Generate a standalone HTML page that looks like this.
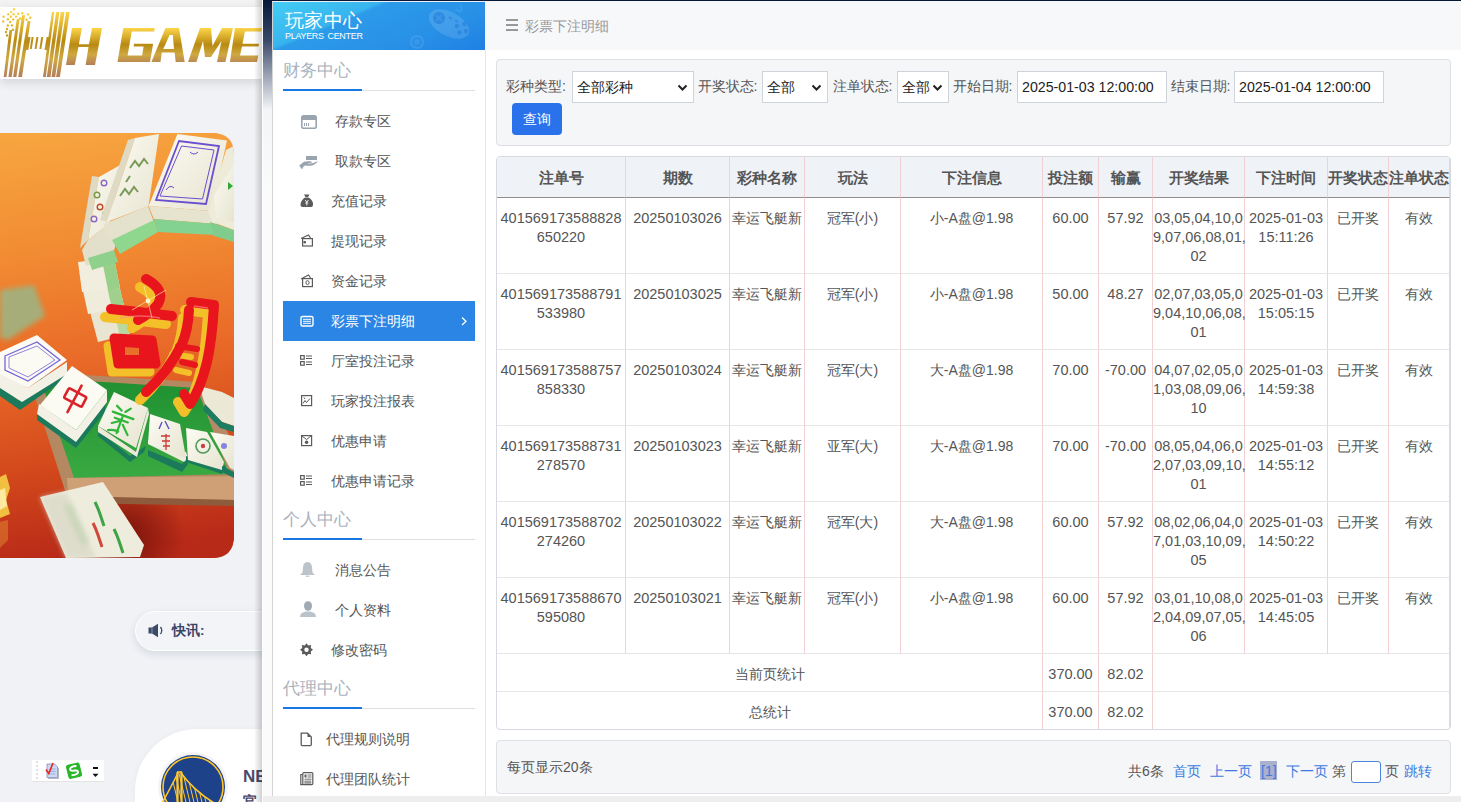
<!DOCTYPE html>
<html><head><meta charset="utf-8">
<style>
*{box-sizing:border-box}
html,body{margin:0;padding:0}
body{width:1461px;height:802px;overflow:hidden;position:relative;background:#f0f2f6;font-family:"Liberation Sans",sans-serif;color:#555}
.abs{position:absolute}
/* background page */
#topstrip{left:0;top:0;width:262px;height:7px;background:#f3f3f3}
#logobar{left:0;top:7px;width:262px;height:72px;background:#fff;box-shadow:0 3px 10px rgba(0,0,0,.13)}
#banner{left:0;top:133px;width:234px;height:425px;border-radius:0 22px 22px 0;overflow:hidden;background:linear-gradient(180deg,#f5a142 0%,#ef7a2a 30%,#e2561f 60%,#b8321a 85%,#a82818 100%)}
#pill{left:135px;top:611px;width:160px;height:40px;border-radius:20px;background:#f2f4f8;border:1px solid #fff;box-shadow:0 3px 8px rgba(20,30,60,.12)}
#card{left:135px;top:729px;width:200px;height:140px;border-radius:62px;background:#fff;box-shadow:0 0 6px rgba(0,0,0,.04)}
#sogou{left:32px;top:760px;width:72px;height:22px;background:#fff;border-bottom:1px solid #e4e4e4}
#pageedge{left:254px;top:0px;width:8px;height:802px;background:linear-gradient(90deg,rgba(0,0,0,0),rgba(0,0,0,.18))}
/* frame */
#frame{left:262px;top:0;width:1199px;height:802px;background:linear-gradient(180deg,#06173a 0px,#3a4868 40px,#9aa2b4 75px,#f4f5f7 110px,#fbfbfc 200px,#fbfbfc 100%)}
#frame:before{content:"";position:absolute;left:0;top:0;width:1px;height:802px;background:#fff}
#modal{left:272px;top:1px;width:1189px;height:795px;background:#fff;border-left:1px solid #d4d4d4;border-top:1px solid #eee}
#bottombar{left:263px;top:796px;width:1198px;height:6px;background:#eeeeef}
/* sidebar */
#side{left:273px;top:2px;width:212px;height:794px;background:#fff}
#sidehead{left:273px;top:2px;width:212px;height:48px;background:linear-gradient(157deg,#44cdf4 0%,#38b4ee 33%,#2c9ae9 36%,#2891e7 70%,#1f80e3 100%);overflow:hidden}
#sideborder{left:485px;top:50px;width:1px;height:746px;background:#e3e6ea}
.ht1{position:absolute;left:11.5px;top:8px;font-size:18.5px;color:#fff;line-height:22px;letter-spacing:.6px}
.ht2{position:absolute;left:12px;top:29px;font-size:9px;color:#fff;line-height:10px;letter-spacing:-0.3px;word-spacing:1.5px}
.sec{position:absolute;left:283px;font-size:17px;color:#a9b2be;line-height:20px}
.secline{position:absolute;left:283px;width:192px;height:1px;background:#dcdfe3}
.secline i{position:absolute;left:0;top:-1px;width:79px;height:2px;background:#1a78e2}
.mt{position:absolute;font-size:14px;line-height:20px;white-space:nowrap}
/* main */
#mainhead{left:486px;top:1px;width:975px;height:49px;background:#f7f8fa}
#title{left:525px;top:17.5px;font-size:14px;color:#999;line-height:16px}
#filter{left:496px;top:59px;width:955px;height:87px;background:#f5f6f8;border:1px solid #dde0e5;border-radius:4px}
.lbl{position:absolute;top:78px;font-size:14.2px;color:#555;line-height:16px}
.sel{position:absolute;top:71px;height:32px;background:#fff;border:1px solid #ced4da;font-size:14px;color:#222;line-height:30px;padding-left:4px}
.sel svg{position:absolute;right:5px;top:12px}
.inp{position:absolute;top:71px;height:32px;background:#fff;border:1px solid #ced4da;font-size:14.2px;color:#222;line-height:30px;padding-left:4px}
#btn{left:512px;top:103px;width:50px;height:32px;border-radius:4px;background:#2a72ec;color:#fff;font-size:14px;line-height:32px;text-align:center}
#tbl{position:absolute;left:496px;top:156px;border-collapse:separate;border-spacing:0;table-layout:fixed;width:954px;border:1px solid #d6dae0;border-radius:4px;overflow:hidden}
#tbl th{background:#eff2f6;height:41px;font-size:15px;font-weight:bold;color:#555;text-align:center;border-right:1px solid #f3d0d3;border-bottom:1px solid #978c8c;padding:2px 0 0 0;white-space:nowrap}
#tbl td{white-space:nowrap;font-size:14px;color:#555;text-align:center;vertical-align:top;border-right:1px solid #f3d0d3;border-bottom:1px solid #e6e6e6;padding:10.6px 0 0 0;line-height:19px;height:76px}
#tbl tr.sum td{height:38px;vertical-align:middle;padding:4px 0 0 0;line-height:19px}
#tbl tr.sum:last-child td{height:37px}
#tbl td.n{font-size:14.5px}
#tbl th:last-child,#tbl td:last-child{border-right:1px solid #f3d0d3}
#tbl tr:last-child td{border-bottom:none}
#pager{left:496px;top:740px;width:955px;height:54px;background:#f5f6f8;border:1px solid #dde0e5;border-radius:4px}
.pg{position:absolute;top:763px;font-size:14px;line-height:16px;color:#555}
.pg.b{color:#3b7be0}
</style></head>
<body>
<!-- ============ background page ============ -->
<div id="topstrip" class="abs"></div>
<div id="logobar" class="abs"></div>
<div id="banner" class="abs"></div>
<div id="pill" class="abs"></div>
<div id="card" class="abs"></div>
<div id="sogou" class="abs"></div>
<div id="bgcontent">
<svg class="abs" style="left:0;top:7px" width="262" height="72" viewBox="0 7 262 72">
<defs><linearGradient id="gold" x1="0" y1="0" x2="0" y2="1" gradientUnits="objectBoundingBox">
<stop offset="0" stop-color="#fcd54a"/><stop offset=".45" stop-color="#b98a12"/><stop offset=".7" stop-color="#cfa842"/><stop offset="1" stop-color="#b47e58"/></linearGradient>
<linearGradient id="gold2" x1="0" y1="12" x2="0" y2="77" gradientUnits="userSpaceOnUse">
<stop offset="0" stop-color="#fcd54a"/><stop offset=".45" stop-color="#b98a12"/><stop offset=".72" stop-color="#cfa842"/><stop offset="1" stop-color="#b47e58"/></linearGradient>
<linearGradient id="gold3" x1="0" y1="28" x2="0" y2="65" gradientUnits="userSpaceOnUse">
<stop offset="0" stop-color="#fcd54a"/><stop offset=".45" stop-color="#b98a12"/><stop offset=".72" stop-color="#cfa842"/><stop offset="1" stop-color="#b47e58"/></linearGradient></defs>
<g fill="url(#gold2)">
<polygon points="3.7,77 6.5,77 12.2,30 9.4,30"/><polygon points="8.4,77 11.7,77 19.6,19 16.8,19"/><polygon points="13.1,77 16.4,77 25,15.3 22,15.3"/><polygon points="18.2,77 22,77 30.5,21 27.5,21"/>
<polygon points="43,77 45.8,77 54.3,12 51.9,12"/><polygon points="46.8,77 50.5,77 59.4,12 56.1,12"/><polygon points="51.5,77 55.2,77 64.5,12 60.8,12"/><polygon points="56.1,77 59.9,77 69.7,12 66,12"/>
<polygon points="24.5,50 26.7,37 30.5,37 28.3,50"/><polygon points="44.5,50 46.7,37 50.5,37 48.3,50"/>
<polygon points="29.8,49 31.6,37 33.6,37 31.8,49"/><polygon points="34.6,49 36.4,37 38.4,37 36.6,49"/><polygon points="39.4,49 41.2,37 43.2,37 41.4,49"/>
<circle cx="14" cy="9.3" r="1.2"/><circle cx="11.2" cy="12" r="1.2"/><circle cx="8.2" cy="14.3" r="1.2"/><circle cx="13.6" cy="14.2" r="1.2"/><circle cx="3.6" cy="16.8" r="1.2"/><circle cx="10.8" cy="16.8" r="1.2"/><circle cx="16" cy="16.6" r="1.2"/><circle cx="18.2" cy="13.8" r="1.2"/><circle cx="22.2" cy="13.2" r="1.2"/><circle cx="28" cy="14.4" r="1.2"/><circle cx="30.2" cy="17.8" r="1.2"/><circle cx="20.2" cy="18.5" r="1.2"/>
<circle cx="7.9" cy="19.2" r="1.2"/><circle cx="13.2" cy="19.4" r="1.2"/><circle cx="3.2" cy="21.4" r="1.2"/><circle cx="10.2" cy="22" r="1.2"/><circle cx="26.6" cy="19.8" r="1.2"/><circle cx="7.8" cy="25.4" r="1.2"/><circle cx="12" cy="25.4" r="1.2"/><circle cx="7" cy="29" r="1.2"/><circle cx="13" cy="29.8" r="1.2"/><circle cx="6" cy="32" r="1.2"/><circle cx="7" cy="35.5" r="1.2"/>
</g>
<g fill="url(#gold3)" fill-rule="evenodd">
<polygon points="72,28 81.9,28 78.9,44.3 89,44.3 92,28 102,28 95,65 85.6,65 88.5,47.1 78.4,47.1 74.8,65 66,65"/>
<polygon points="123.3,28 154.8,28 154.2,31.4 131.7,31.4 127.6,55.5 142.1,55.5 143.6,46.5 133.6,46.5 134.1,43.7 153.1,43.7 150,62 117.5,62"/>
<path d="M151.4 62 L165.5 28 L179 28 L184.7 62 L175.7 62 L174.6 52.5 L161.8 52.5 L160.5 62 Z M163.3 49 L174 49 L172.8 35 L169.6 35 Z"/>
<polygon points="188,62 200,28 211,28 212.5,46 222,28 233,28 225.4,62 217,62 221.5,41 211,57 205,57 203,41 196.5,62"/>
<polygon points="235,28 262,28 261.4,31.4 244.9,31.4 242.5,43.7 259,43.7 258.5,46.5 242,46.5 240,55.5 258.3,55.5 257,62 229.9,62"/>
</g>
</svg>
<svg class="abs" style="left:0;top:133px" width="234" height="425" viewBox="0 133 234 425">
<defs>
<clipPath id="bclip"><path d="M0 133 H212 Q234 133 234 155 V536 Q234 558 212 558 H0 Z"/></clipPath>
<linearGradient id="bbg" x1="0" y1="133" x2="60" y2="558" gradientUnits="userSpaceOnUse">
<stop offset="0" stop-color="#f7a640"/><stop offset=".3" stop-color="#f18a32"/><stop offset=".55" stop-color="#e96a28"/><stop offset=".78" stop-color="#d44a1c"/><stop offset="1" stop-color="#b82a18"/></linearGradient>
<radialGradient id="dark" cx="125" cy="535" r="60" gradientUnits="userSpaceOnUse"><stop offset="0" stop-color="#6a0c08" stop-opacity=".8"/><stop offset="1" stop-color="#6a0c08" stop-opacity="0"/></radialGradient>
<linearGradient id="tile" x1="0" y1="0" x2="1" y2="1"><stop offset="0" stop-color="#fdfcf4"/><stop offset="1" stop-color="#e6e3cf"/></linearGradient>
<linearGradient id="felt" x1="0" y1="0" x2="0" y2="1"><stop offset="0" stop-color="#1f8f30"/><stop offset="1" stop-color="#3aaa42"/></linearGradient>
<filter id="blur2"><feGaussianBlur stdDeviation="2.5"/></filter>
<filter id="blur1"><feGaussianBlur stdDeviation="0.45"/></filter>
</defs>
<g clip-path="url(#bclip)">
<rect x="0" y="133" width="234" height="425" fill="url(#bbg)"/>
<rect x="0" y="133" width="234" height="425" fill="url(#dark)"/>
<g filter="url(#blur1)">
<!-- arc tiles -->
<polygon points="90,312 122,298 130,334 98,342" fill="#e9e5d0"/>
<polygon points="112,300 122,298 130,334 120,338" fill="#b9d8a0"/>
<polygon points="82,286 118,280 124,306 88,314" fill="#efecdb"/>
<polygon points="106,282 118,280 124,306 112,309" fill="#9fd08c"/>
<polygon points="78,262 114,258 120,288 82,292" fill="#f1eedf"/>
<polygon points="102,260 114,258 120,288 108,290" fill="#98d08a"/>
<!-- T4 circles -->
<polygon points="82,250 88,240 109,224 118,236 112,258 86,266" fill="#e2dfca"/>
<polygon points="88,258 114,250 118,262 92,270" fill="#8fd08c"/>
<polygon points="80,248 92,176 99,177 88,240" fill="#dedac4"/>
<polygon points="88,240 99,177 122,164 109,224" fill="url(#tile)"/>
<circle cx="104" cy="183" r="2.8" fill="none" stroke="#8d66c0" stroke-width="1.4"/><circle cx="97" cy="195" r="2.8" fill="none" stroke="#7a9a4a" stroke-width="1.4"/><circle cx="100" cy="207" r="2.8" fill="none" stroke="#c04a28" stroke-width="1.4"/><circle cx="94" cy="219" r="2.8" fill="none" stroke="#8d66c0" stroke-width="1.4"/><circle cx="105" cy="214" r="2.4" fill="none" stroke="#7a9a4a" stroke-width="1.2"/>
<!-- T3 bamboo -->
<polygon points="104,224 148,206 154,222 118,242 106,236" fill="#e4e1cc"/>
<polygon points="112,240 154,220 158,232 120,254" fill="#8fd68f"/>
<polygon points="100,220 128,140 135,138 107,222" fill="#dedac4"/>
<polygon points="107,222 135,138 159,134 148.6,206" fill="url(#tile)"/>
<path d="M130 168 l5 -7 l4 5 l5 -7 l4 5 M120 196 l5 -7 l4 5 l5 -7 l4 5 M126 182 l4 -6" stroke="#7a9a5a" stroke-width="2" fill="none"/>
<!-- T2 purple -->
<polygon points="148.6,206 211.5,211 216.7,224 153.8,219" fill="#e6e3cf"/>
<polygon points="153.8,219 216.7,224 215,235 158,232" fill="#84d292"/>
<polygon points="148.6,206 177.4,134 227,140.5 211.5,211" fill="url(#tile)"/>
<polygon points="156,200 179,141 219,146 206,204" fill="none" stroke="#6a4fd0" stroke-width="1.8"/>
<polygon points="160,196 181.5,146 214,150 202.5,199" fill="none" stroke="#6a4fd0" stroke-width="1"/>
<path d="M166 190 q4 -6 8 -2 M198 152 q-4 4 -8 0" stroke="#6a4fd0" stroke-width="1" fill="none"/>
<!-- T1 right -->
<polygon points="210,222 234,230 234,242 214,236" fill="#80cc8c"/>
<polygon points="208,212 226,150 234,146 234,230 212,222" fill="#eeebd8"/>
<polygon points="214,196 234,164 234,222 216,218" fill="url(#tile)"/>
<path d="M228 182 l5 4 l-5 4 z" fill="#2fa83a"/>
<!-- blurry left tile -->
<polygon points="0,290 34,285 45,316 8,340 0,338" fill="#a6ad78" filter="url(#blur2)"/>
<!-- table: frame -->
<polygon points="37,372 198,382 234,446 234,504 68,500 36,400" fill="#b48860"/>
<polygon points="40,378 197,388 232,474 74,478" fill="url(#felt)"/>
<polygon points="197,388 202,386 234,444 234,476 230,476" fill="#b68a66"/>
<polygon points="67,478 234,476 234,500 68,496" fill="#cf9f74"/>
<polygon points="68,496 234,500 234,506 70,503" fill="#8e5c3c"/>
<!-- tile wall right -->
<polygon points="199,386 222,392 234,398 234,426 222,422 205,404" fill="#ebe8d6"/>
<polygon points="205,404 222,422 234,426 234,432 220,428 203,410" fill="#1f7d62"/>
<!-- purple tile left -->
<polygon points="0,384 18,400 62,372 66,378 20,410 0,396" fill="#1b7a5c"/>
<polygon points="0,372 28,388 67,362 67,374 22,402 0,388" fill="#f3f1e6"/>
<polygon points="0,352 37,335 67,360 28,388 0,374" fill="#fbfaf3"/>
<polygon points="5,356 37,342 60,360 28,381 5,370" fill="none" stroke="#7566d8" stroke-width="1.3"/>
<polygon points="9,357 37,346 55,360 28,377 9,368" fill="none" stroke="#7566d8" stroke-width=".8"/>
<!-- 中 tile -->
<polygon points="37,412 76,440 105,404 105,412 76,448 37,420" fill="#1b7a5c"/>
<polygon points="39,404 76,430 107,390 107,402 76,442 37,414" fill="#f3f1e6"/>
<polygon points="40,405 72,366 107,390 76,430" fill="#fbfaf3"/>
<g transform="rotate(28 75 398)" stroke="#d9242a" stroke-width="2.6" fill="none" stroke-linecap="round"><rect x="65" y="392" width="20" height="11" rx="1.5"/><path d="M75 384 V414"/></g>
<!-- 發 tile -->
<polygon points="98,436 130,462 144,452 146,446 130,456 98,430" fill="#1b7a5c"/>
<polygon points="98,426 136,452 148,408 149,414 137,457 98,432" fill="#eeeadb"/>
<polygon points="98,426 114,392 148,408 136,448" fill="url(#tile)"/>
<g transform="rotate(20 121 421)" stroke="#2eb63a" stroke-width="2.2" fill="none" stroke-linecap="round"><path d="M112 408 l6 3 M126 406 l-4 5 M110 415 H132 M114 420 H128 M121 415 V434 M113 426 l6 -4 M124 424 l8 8 M112 434 q6 -3 10 -2"/></g>
<!-- 八萬 tile -->
<polygon points="148,456 182,472 188,464 186,458 182,464 148,450" fill="#1b7a5c"/>
<polygon points="148,444 184,462 188,458 186,452 148,440" fill="#eeeadb"/>
<polygon points="148,444 150,414 180,424 186,458" fill="url(#tile)"/>
<path d="M162 422 l-3 7 M165 421 l4 8" stroke="#5a4ccc" stroke-width="1.4" fill="none"/>
<path d="M161 436 h9 M162 441 h8 M163 446 h7 M166 434 v16" stroke="#d03636" stroke-width="1.3"/>
<!-- circle tile -->
<polygon points="186,462 222,474 226,466 186,456" fill="#1b7a5c"/>
<polygon points="186,428 207,432 224,462 222,470 188,460" fill="url(#tile)"/>
<circle cx="203" cy="446" r="7" fill="none" stroke="#4e9a5a" stroke-width="1.6"/><circle cx="203" cy="446" r="2.2" fill="#c84040"/>
<polygon points="210,432 234,436 234,470 230,468" fill="url(#tile)"/>
<circle cx="224" cy="446" r="3" fill="#6a6adc" opacity=".8"/>
<polygon points="222,466 234,472 234,478 222,472" fill="#1b7a5c"/>
<!-- 胡 gold extrusion -->
<g transform="translate(-6,8)" stroke="#f3c02c" stroke-linecap="round" stroke-linejoin="round" fill="none">
<path d="M146 279 Q166 290 158 304 Q150 314 138 320" stroke-width="10"/>
<path d="M111 309 Q140 312 172 316" stroke-width="10"/>
<path d="M114 338 L152 340 L156 364 L118 364 Z" stroke-width="9" fill="#f3c02c"/>
<path d="M189 310 Q188 330 182 344 Q168 372 146 392" stroke-width="10"/>
<path d="M191 302 L214 305 Q212 340 207 362 Q200 390 190 404 L184 394" stroke-width="10"/>
<path d="M178 346 L197 349 M182 362 L195 365" stroke-width="6"/>
</g>
<g stroke="#e8161c" stroke-linecap="round" stroke-linejoin="round" fill="none">
<path d="M146 279 Q166 290 158 304 Q150 314 138 320" stroke-width="10"/>
<path d="M111 309 Q140 312 172 316" stroke-width="10"/>
<path d="M114 338 L152 340 L156 364 L118 364 Z" stroke-width="9" fill="#e8161c"/>
<path d="M189 310 Q188 330 182 344 Q168 372 146 392" stroke-width="10"/>
<path d="M191 302 L214 305 Q212 340 207 362 Q200 390 190 404 L184 394" stroke-width="10"/>
<path d="M178 346 L197 349 M182 362 L195 365" stroke-width="6"/>
</g>
<path d="M125 347 L139 348 L139 355 L125 355 Z" fill="#e8702a"/>
<circle cx="148" cy="301" r="2.4" fill="#fffbd8"/>
<path d="M132 310 L166 290 M144 286 L152 318" stroke="#fff3b0" stroke-width="0.8" opacity=".8"/>
<path d="M120 318 q20 -4 40 0 M194 306 l14 2" stroke="#ff8a8a" stroke-width="1.5" opacity=".6" fill="none"/>
<!-- bottom tile -->
<polygon points="40,497 103,482 144,545 140,557 66,558" fill="#eeecdc" filter="url(#blur1)"/>
<polygon points="40,497 66,492 96,558 66,558" fill="#d8d6c4" opacity=".7" filter="url(#blur2)"/>
<path d="M95 502 q3 6 5 12 q2 6 4 12" stroke="#3ea346" stroke-width="3" fill="none"/>
<path d="M114 529 q3 6 5 12 q2 6 4 12" stroke="#3ea346" stroke-width="3" fill="none"/>
<path d="M93 523 q3 6 5 12 q2 6 4 12" stroke="#d0463a" stroke-width="3" fill="none"/>
<path d="M66 505 L84 545 M70 503 L88 543" stroke="#7fbf7a" stroke-width="1.5" opacity=".6" filter="url(#blur2)"/>
<!-- left gold char -->
<polygon points="0,477 6,474 10,488 6,500 10,514 0,518" fill="#f2c040"/>
<polygon points="0,490 5,488 7,506 0,510" fill="#fff2b8" opacity=".8"/>
<polygon points="0,522 8,520 8,540 0,548" fill="#f0b040" opacity=".35"/>
</g>
</g>
</svg>
<svg class="abs" style="left:148px;top:623px" width="16" height="15" viewBox="0 0 16 15"><path d="M0.5 4.5 H4 L10 0.8 V14.2 L4 10.5 H0.5 Z" fill="#3c4a6a"/><path d="M4 4.5 V10.5" stroke="#8a92a8" stroke-width="1"/><path d="M12.5 4 Q15 7.5 12.5 11" stroke="#3c4a6a" stroke-width="1.3" fill="none"/></svg>
<div class="abs" style="left:172px;top:622px;font-size:13.5px;font-weight:bold;color:#3a4566;line-height:18px">快讯:</div>
<svg class="abs" style="left:157px;top:751px" width="72" height="72" viewBox="0 0 72 72">
<circle cx="36" cy="36" r="35" fill="#f4f4f6"/>
<circle cx="36" cy="36" r="32" fill="#1d428a"/>
<circle cx="36" cy="36" r="30" fill="none" stroke="#ffc72c" stroke-width="1.6"/>
<defs><clipPath id="gswc"><path d="M24 22 Q40 44 68 58 L68 72 L4 72 L4 54 Q14 36 21 22 Z"/></clipPath></defs>
<g stroke="#ffc72c" fill="none">
<g clip-path="url(#gswc)"><path d="M12 14 L26 72 M16 14 L30 72 M20 14 L34 72 M24 14 L38 72 M28 14 L42 72 M32 14 L46 72 M36 14 L50 72 M40 14 L54 72 M44 14 L58 72 M48 14 L62 72 M52 14 L66 72 M56 14 L70 72 M60 14 L74 72 M64 14 L78 72 M68 14 L82 72 " stroke-width="1"/></g>
<path d="M20.5 21 V72 M24.5 21 V72" stroke-width="2.2"/>
<path d="M20 21 H25" stroke-width="1.6"/>
<path d="M21 22 Q14 36 4 54" stroke-width="1.6"/>
<path d="M24 22 Q40 44 68 58" stroke-width="1.6"/>
</g>
</svg>
<div class="abs" style="left:243px;top:767px;font-size:17px;font-weight:bold;color:#4a4a68;line-height:20px;width:19px;overflow:hidden">NE</div>
<div class="abs" style="left:243px;top:793px;font-size:14px;font-weight:bold;color:#4a4a68;line-height:16px;width:19px;overflow:hidden">官方</div>
<svg class="abs" style="left:32px;top:760px" width="72" height="22" viewBox="0 0 72 22">
<path d="M5 1.5 V20" stroke="#999" stroke-width="1" stroke-dasharray="1.2 2.8"/>
<path d="M15 4 H22.5 L25.5 7 V17.5 H15 Z" fill="#cbd9f4" stroke="#8a9ac8" stroke-width="0.9"/>
<path d="M16 18.5 H26.5 V8" stroke="#9a9aaa" stroke-width="1" fill="none" opacity=".7"/>
<path d="M17.5 9 H23.5 M17.5 11.5 H23.5 M17.5 14 H23.5" stroke="#8aa8e0" stroke-width=".8"/>
<path d="M14 9.5 L16.8 13.5 L21 3" stroke="#e8281c" stroke-width="1.6" fill="none"/>
<g transform="rotate(-14 42 10.7)"><rect x="35" y="3.5" width="14" height="14.5" rx="2.5" fill="#2bb52b"/>
<path d="M45.5 6.8 Q39 5.5 38.5 8.5 Q38.5 10.5 42.5 10.7 Q46 11 45.5 13.3 Q44.5 15.5 38.5 14.5" stroke="#fff" stroke-width="2" fill="none"/></g>
<rect x="61" y="7" width="5" height="2" fill="#111"/><path d="M60.5 13.8 H66.5 L63.5 17 Z" fill="#111"/>
</svg>
</div><!--/bgcontent-->
<div id="pageedge" class="abs"></div>

<!-- ============ modal ============ -->
<div id="frame" class="abs"></div>
<div id="modal" class="abs"></div>
<div id="bottombar" class="abs"></div>
<div id="side" class="abs"></div>
<div id="sidehead" class="abs">
  <svg style="position:absolute;left:0;top:0" width="212" height="48" viewBox="273 2 212 48">
<g transform="rotate(28 449 24)"><ellipse cx="449" cy="24" rx="22" ry="12" fill="#ffffff" opacity=".12"/></g>
<circle cx="439" cy="18" r="6" fill="#1a6fd8" opacity=".45"/>
<path d="M436 15 L442 21 M442 15 L436 21" stroke="#3aa3ec" stroke-width="1.5" opacity=".7"/>
<circle cx="457" cy="26" r="2.2" fill="#1a6fd8" opacity=".4"/><circle cx="464.5" cy="24" r="2.2" fill="#1a6fd8" opacity=".4"/><circle cx="459.5" cy="32.5" r="2.2" fill="#1a6fd8" opacity=".4"/><circle cx="466" cy="31" r="2.2" fill="#1a6fd8" opacity=".4"/>
<path d="M449 17 L452 19 M455 20 L458 22" stroke="#1a6fd8" stroke-width="2" opacity=".4"/>
<path d="M455 11 Q457 8 459 11 Q461 13 462 9 L460 5" stroke="#ffffff" stroke-width="1" fill="none" opacity=".15"/>
<circle cx="417" cy="42" r="6" fill="none" stroke="#ffffff" stroke-width="2" opacity=".1"/><circle cx="417" cy="42" r="3" fill="#ffffff" opacity=".08"/>
</svg>
  <div class="ht1">玩家中心</div>
  <div class="ht2">PLAYERS CENTER</div>
</div>
<div id="sideborder" class="abs"></div>
<div id="sidemenu">
<div class="sec" style="top:61px">财务中心</div>
<div class="secline" style="top:90px"><i></i></div>
<div class="sec" style="top:510px">个人中心</div>
<div class="secline" style="top:539px"><i></i></div>
<div class="sec" style="top:679px">代理中心</div>
<div class="secline" style="top:708px"><i></i></div>
<div class="abs" style="left:283px;top:301px;width:192px;height:40px;background:#2b85e4"></div>
<div class="mt" style="left:335px;top:111px;color:#555">存款专区</div>
<div class="mt" style="left:335px;top:151px;color:#555">取款专区</div>
<div class="mt" style="left:331px;top:191px;color:#555">充值记录</div>
<div class="mt" style="left:331px;top:231px;color:#555">提现记录</div>
<div class="mt" style="left:331px;top:271px;color:#555">资金记录</div>
<div class="mt" style="left:331px;top:311px;color:#fff">彩票下注明细</div>
<div class="mt" style="left:331px;top:351px;color:#555">厅室投注记录</div>
<div class="mt" style="left:331px;top:391px;color:#555">玩家投注报表</div>
<div class="mt" style="left:331px;top:431px;color:#555">优惠申请</div>
<div class="mt" style="left:331px;top:471px;color:#555">优惠申请记录</div>
<div class="mt" style="left:335px;top:560px;color:#555">消息公告</div>
<div class="mt" style="left:335px;top:600px;color:#555">个人资料</div>
<div class="mt" style="left:331px;top:640px;color:#555">修改密码</div>
<div class="mt" style="left:326px;top:729px;color:#555">代理规则说明</div>
<div class="mt" style="left:326px;top:769px;color:#555">代理团队统计</div>
<svg class="abs" style="left:273px;top:0" width="212" height="802" viewBox="273 0 212 802"><rect x="301.8" y="115.8" width="14.4" height="12.4" rx="2" fill="none" stroke="#9aa4ae" stroke-width="1.6"/><rect x="302" y="116" width="14" height="4" fill="#9aa4ae"/><path d="M304.5 123v3M306.5 123v3M308.5 123v3" stroke="#9aa4ae" stroke-width="1"/><rect x="306" y="156" width="11" height="4" fill="#9aa4ae"/><path d="M300.5 164.5 L304 161.8 Q306 161 309 161.2 L311.5 161.5 Q312.5 162.3 311 163 L307.5 163.2 L309 163.8 Q313 163.4 318 161 Q317 163.5 313 165.2 Q309 166.3 305 165.5 L302 167.8 Z" fill="#9aa4ae"/><path d="M300 165 L302.5 168.5" stroke="#9aa4ae" stroke-width="2"/><path d="M304 194.5 L309.5 194.5 L308 197 L305.5 197 Z" fill="#5a5a5a"/><path d="M305 197.5 L308.5 197.5 Q313.5 200.5 313 205 Q313 207 311 207 L302.5 207 Q300.5 207 300.5 205 Q300.5 200.5 305 197.5 Z" fill="#5a5a5a"/><path d="M305.2 200 L306.8 202.2 L308.4 200 M306.8 202.2 V205.5 M305.3 203 H308.3" stroke="#fff" stroke-width="0.9" fill="none"/><path d="M301 238.5 L308.5 235 L310.5 238" fill="none" stroke="#5a5a5a" stroke-width="1.2"/><rect x="302.6" y="238.6" width="9.8" height="7.4" fill="none" stroke="#5a5a5a" stroke-width="1.2"/><rect x="303.5" y="241" width="2.4" height="2.4" fill="#5a5a5a"/><path d="M301 279 L308.5 275 L310.5 278" fill="none" stroke="#5a5a5a" stroke-width="1.2"/><rect x="302.6" y="278.6" width="9.8" height="8" fill="none" stroke="#5a5a5a" stroke-width="1.2"/><ellipse cx="307.5" cy="282.6" rx="1.6" ry="2" fill="none" stroke="#5a5a5a" stroke-width="1"/><rect x="301" y="316.5" width="12" height="9.5" rx="1.5" fill="none" stroke="#fff" stroke-width="1.4"/><path d="M303 319.3H311M303 321.3H311M303 323.3H311" stroke="#fff" stroke-width="1"/><rect x="300.6" y="355.6" width="3.6" height="3.6" fill="none" stroke="#5a5a5a" stroke-width="1.2"/><rect x="300.6" y="361.6" width="3.6" height="3.6" fill="none" stroke="#5a5a5a" stroke-width="1.2"/><path d="M306 356H312M306 358.5H312M306 362H312M306 364.5H312" stroke="#5a5a5a" stroke-width="1"/><rect x="300.6" y="475.6" width="3.6" height="3.6" fill="none" stroke="#5a5a5a" stroke-width="1.2"/><rect x="300.6" y="481.6" width="3.6" height="3.6" fill="none" stroke="#5a5a5a" stroke-width="1.2"/><path d="M306 476H312M306 478.5H312M306 482H312M306 484.5H312" stroke="#5a5a5a" stroke-width="1"/><rect x="301.6" y="395.6" width="10" height="10" fill="none" stroke="#5a5a5a" stroke-width="1.2"/><path d="M303 403.5 L305 400.5 L306.5 402.5 L310 398.5 M304 397.5 L305 399" fill="none" stroke="#5a5a5a" stroke-width="1"/><rect x="301.6" y="435.6" width="10" height="10" fill="none" stroke="#5a5a5a" stroke-width="1.2"/><path d="M302 436 L306.6 439.5 L311 436" fill="none" stroke="#5a5a5a" stroke-width="1"/><circle cx="306.6" cy="442.3" r="1.7" fill="#5a5a5a"/><path d="M307.5 562 Q311.8 562.3 312 567.5 L312.5 572.5 L315 575 L300 575 L302.5 572.5 L303 567.5 Q303.2 562.3 307.5 562 Z" fill="#bcc3ca"/><path d="M305.8 576.2 H309.2" stroke="#bcc3ca" stroke-width="1.2"/><ellipse cx="308" cy="606" rx="4" ry="4.8" fill="#a0aab4"/><path d="M300 617 Q300 613 304 612.2 L305.5 611.5 L310.5 611.5 L312 612.2 Q316 613 316 617 Z" fill="#bac2ca"/><polygon points="313.00,649.70 310.75,651.46 311.10,654.30 308.26,653.95 306.50,656.20 304.74,653.95 301.90,654.30 302.25,651.46 300.00,649.70 302.25,647.94 301.90,645.10 304.74,645.45 306.50,643.20 308.26,645.45 311.10,645.10 310.75,647.94" fill="#5a5a5a"/><circle cx="306.5" cy="649.7" r="2.2" fill="#fff"/><path d="M301.2 733.2 H307.5 L311.3 737 V744.5 Q311.3 745.6 310.2 745.6 H302.3 Q301.2 745.6 301.2 744.5 Z" fill="none" stroke="#5a5a5a" stroke-width="1.3"/><path d="M307.5 733.5 V737 H311" fill="#5a5a5a"/><rect x="302.8" y="772.6" width="10" height="12" rx="1" fill="none" stroke="#5a5a5a" stroke-width="1.2"/><path d="M302.5 774.5 H300.8 V784.6 H303" fill="none" stroke="#5a5a5a" stroke-width="1.2"/><rect x="304.5" y="774.5" width="2" height="3" fill="#5a5a5a"/><path d="M307.5 775H311.5M307.5 777H311.5M304.5 779.2H311.5" stroke="#5a5a5a" stroke-width="0.9"/><rect x="304.3" y="780.5" width="7" height="3.3" fill="#9a9a9a"/><path d="M462 317.5 L466 321.3 L462 325" fill="none" stroke="#fff" stroke-width="1.3"/></svg>
</div>

<!-- main -->
<div id="mainhead" class="abs"></div>
<svg class="abs" style="left:506px;top:19px" width="12" height="12"><rect x="0" y="0" width="12" height="2" fill="#999"/><rect x="0" y="5" width="12" height="2" fill="#999"/><rect x="0" y="10" width="12" height="2" fill="#999"/></svg>
<div id="title" class="abs">彩票下注明细</div>
<div id="filter" class="abs"></div>

<div class="lbl" style="left:506px">彩种类型:</div>
<div class="sel" style="left:572px;width:122px">全部彩种<svg width="11" height="8" viewBox="0 0 11 8"><path d="M1.5 1.5 L5.5 5.5 L9.5 1.5" fill="none" stroke="#222" stroke-width="2"/></svg></div>
<div class="lbl" style="left:697.5px">开奖状态:</div>
<div class="sel" style="left:762px;width:66px">全部<svg width="11" height="8" viewBox="0 0 11 8"><path d="M1.5 1.5 L5.5 5.5 L9.5 1.5" fill="none" stroke="#222" stroke-width="2"/></svg></div>
<div class="lbl" style="left:832.5px">注单状态:</div>
<div class="sel" style="left:897px;width:52px">全部<svg width="11" height="8" viewBox="0 0 11 8"><path d="M1.5 1.5 L5.5 5.5 L9.5 1.5" fill="none" stroke="#222" stroke-width="2"/></svg></div>
<div class="lbl" style="left:952.5px">开始日期:</div>
<div class="inp" style="left:1017px;width:150px">2025-01-03 12:00:00</div>
<div class="lbl" style="left:1170.5px">结束日期:</div>
<div class="inp" style="left:1234px;width:150px">2025-01-04 12:00:00</div>
<div id="btn" class="abs">查询</div>
<table id="tbl"><colgroup>
<col style="width:129px">
<col style="width:104px">
<col style="width:75px">
<col style="width:96px">
<col style="width:142px">
<col style="width:56px">
<col style="width:54px">
<col style="width:92px">
<col style="width:83px">
<col style="width:61px">
<col style="width:61px">
</colgroup><tr>
<th>注单号</th>
<th>期数</th>
<th>彩种名称</th>
<th>玩法</th>
<th>下注信息</th>
<th>投注额</th>
<th>输赢</th>
<th>开奖结果</th>
<th>下注时间</th>
<th>开奖状态</th>
<th>注单状态</th>
</tr>
<tr>
<td class="n">401569173588828<br>650220</td><td class="n">20250103026</td><td>幸运飞艇新</td><td>冠军(小)</td><td>小-A盘@1.98</td><td class="n">60.00</td><td class="n">57.92</td><td class="n">03,05,04,10,0<br>9,07,06,08,01,<br>02</td><td class="n">2025-01-03<br>15:11:26</td><td>已开奖</td><td>有效</td>
</tr>
<tr>
<td class="n">401569173588791<br>533980</td><td class="n">20250103025</td><td>幸运飞艇新</td><td>冠军(小)</td><td>小-A盘@1.98</td><td class="n">50.00</td><td class="n">48.27</td><td class="n">02,07,03,05,0<br>9,04,10,06,08,<br>01</td><td class="n">2025-01-03<br>15:05:15</td><td>已开奖</td><td>有效</td>
</tr>
<tr>
<td class="n">401569173588757<br>858330</td><td class="n">20250103024</td><td>幸运飞艇新</td><td>冠军(大)</td><td>大-A盘@1.98</td><td class="n">70.00</td><td class="n">-70.00</td><td class="n">04,07,02,05,0<br>1,03,08,09,06,<br>10</td><td class="n">2025-01-03<br>14:59:38</td><td>已开奖</td><td>有效</td>
</tr>
<tr>
<td class="n">401569173588731<br>278570</td><td class="n">20250103023</td><td>幸运飞艇新</td><td>亚军(大)</td><td>大-A盘@1.98</td><td class="n">70.00</td><td class="n">-70.00</td><td class="n">08,05,04,06,0<br>2,07,03,09,10,<br>01</td><td class="n">2025-01-03<br>14:55:12</td><td>已开奖</td><td>有效</td>
</tr>
<tr>
<td class="n">401569173588702<br>274260</td><td class="n">20250103022</td><td>幸运飞艇新</td><td>冠军(大)</td><td>大-A盘@1.98</td><td class="n">60.00</td><td class="n">57.92</td><td class="n">08,02,06,04,0<br>7,01,03,10,09,<br>05</td><td class="n">2025-01-03<br>14:50:22</td><td>已开奖</td><td>有效</td>
</tr>
<tr>
<td class="n">401569173588670<br>595080</td><td class="n">20250103021</td><td>幸运飞艇新</td><td>冠军(小)</td><td>小-A盘@1.98</td><td class="n">60.00</td><td class="n">57.92</td><td class="n">03,01,10,08,0<br>2,04,09,07,05,<br>06</td><td class="n">2025-01-03<br>14:45:05</td><td>已开奖</td><td>有效</td>
</tr>
<tr class="sum"><td colspan="5">当前页统计</td><td class="n">370.00</td><td class="n">82.02</td><td colspan="4"></td></tr>
<tr class="sum"><td colspan="5">总统计</td><td class="n">370.00</td><td class="n">82.02</td><td colspan="4"></td></tr>
</table>
<div id="pager" class="abs"></div>


<div class="pg" style="left:507px;top:759px">每页显示20条</div>
<div class="pg" style="left:1128px">共6条</div>
<div class="pg b" style="left:1173px">首页</div>
<div class="pg b" style="left:1210px">上一页</div>
<div class="abs" style="left:1260px;top:761px;width:17px;height:19px;background:#a9b1cc"></div>
<div class="pg b" style="left:1261px">[1]</div>
<div class="pg b" style="left:1286px">下一页</div>
<div class="pg" style="left:1332px">第</div>
<div class="abs" style="left:1351px;top:761px;width:30px;height:22px;border:1px solid #4a86e0;border-radius:3px;background:#fff"></div>
<div class="pg" style="left:1385px">页</div>
<div class="pg b" style="left:1404px">跳转</div>
</body></html>
